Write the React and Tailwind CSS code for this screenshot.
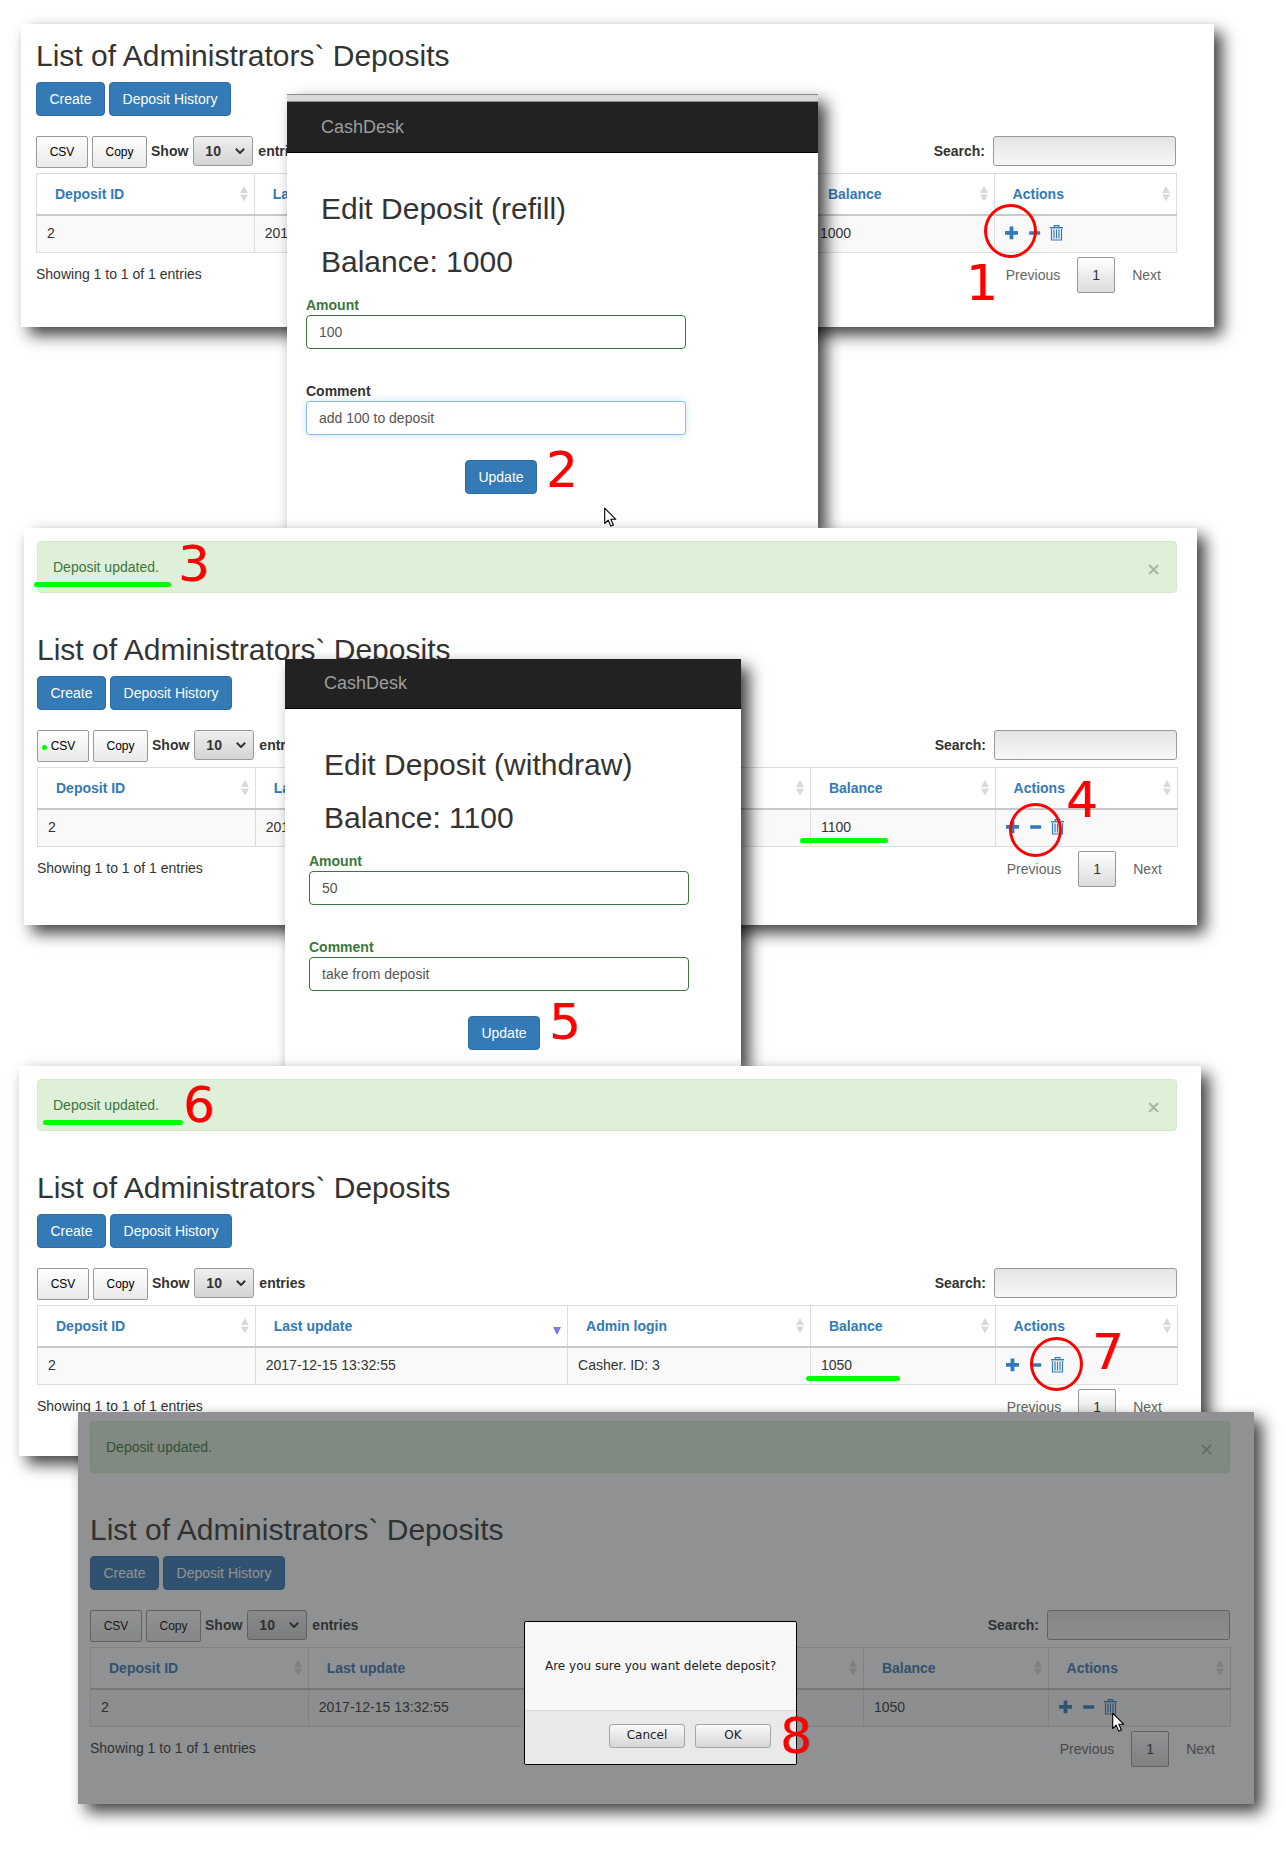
import { useId } from "react";

const blueButton =
  "h-[34px] rounded border border-[#2e6da4] bg-[#337ab7] text-sm leading-5 text-white";
const windowShadow = "shadow-[8px_8px_15px_rgba(0,0,0,0.75)]";

function Digit({ children, className }) {
  return (
    <span
      className={`pointer-events-none absolute font-['DejaVu_Sans',sans-serif] text-[50px] leading-none font-normal text-[#f00] [text-shadow:1px_0_0_rgba(60,0,0,0.35)] ${className}`}
    >
      {children}
    </span>
  );
}

function Ring({ className }) {
  return (
    <span
      className={`pointer-events-none absolute h-[54px] w-[53px] rounded-[50%] border-[3px] border-[#f00] ${className}`}
    />
  );
}

function Marker({ className }) {
  return <span className={`pointer-events-none absolute h-[5px] rounded-full bg-[#00ff00] ${className}`} />;
}

function Cursor({ className }) {
  return (
    <svg viewBox="0 0 13 20" className={`pointer-events-none absolute h-5 w-[13px] ${className}`} aria-hidden="true">
      <path
        d="M.7 1.2v15.3l3.5-3.3 2.6 5.9 2.6-1.2-2.6-5.6h5z"
        fill="#fff"
        stroke="#000"
        strokeWidth="1.1"
        strokeLinejoin="round"
      />
    </svg>
  );
}

function SortIcon({ sorted }) {
  return (
    <svg viewBox="0 0 8 16" className="h-4 w-2 shrink-0" aria-hidden="true">
      {sorted ? (
        <path d="M0 9h8l-3.4 7h-1.2z" fill="#7b7be0" />
      ) : (
        <path d="M4 0l4 7H0zM0 8.5h8l-4 7z" fill="#d9d9d9" />
      )}
    </svg>
  );
}

function PlusIcon() {
  return (
    <svg viewBox="0 0 14 16" className="h-4 w-3.5" fill="currentColor" aria-hidden="true">
      <path d="M5 1.5h3a.4.4 0 0 1 .4.4v4.2h4.2a.4.4 0 0 1 .4.4v2.8a.4.4 0 0 1-.4.4H8.4v4.2a.4.4 0 0 1-.4.4H5a.4.4 0 0 1-.4-.4V9.7H.4a.4.4 0 0 1-.4-.4V6.5a.4.4 0 0 1 .4-.4h4.2V1.9a.4.4 0 0 1 .4-.4z" />
    </svg>
  );
}

function MinusIcon() {
  return (
    <svg viewBox="0 0 14 16" className="h-4 w-3.5" fill="currentColor" aria-hidden="true">
      <rect x="2.2" y="6.2" width="11" height="3.6" rx=".5" />
    </svg>
  );
}

function TrashIcon() {
  return (
    <svg viewBox="0 0 14 16" className="h-4 w-3.5" fill="none" stroke="currentColor" aria-hidden="true">
      <path d="M5.2 2V.6h4.6V2" strokeWidth="1.1" />
      <path d="M1 2.7h13" strokeWidth="1.4" />
      <path d="M2.5 4v11h10V4" strokeWidth="1.2" />
      <path d="M5 4.5v9M7.5 4.5v9M10 4.5v9" strokeWidth="1.2" />
    </svg>
  );
}

const columns = ["Deposit ID", "Last update", "Admin login", "Balance", "Actions"];

function DepositTable({ balance }) {
  return (
    <table className="mt-[5px] w-full table-fixed border-collapse border border-[#ddd] text-sm leading-5">
      <colgroup>
        <col className="w-[19.1%]" />
        <col className="w-[27.4%]" />
        <col className="w-[21.3%]" />
        <col className="w-[16.2%]" />
        <col className="w-[16%]" />
      </colgroup>
      <thead>
        <tr>
          {columns.map((c, i) => (
            <th key={c} className="h-[41px] border border-b-2 border-[#ddd] border-b-[#c8c8c8] p-0 text-left font-bold">
              <div className="flex items-center justify-between pr-1.5 pl-[18px]">
                <a href="#sort" className="text-[#337ab7]">
                  {c}
                </a>
                <SortIcon sorted={i === 1} />
              </div>
            </th>
          ))}
        </tr>
      </thead>
      <tbody>
        <tr className="bg-[#f9f9f9]">
          {["2", "2017-12-15 13:32:55", "Casher. ID: 3", balance].map((v) => (
            <td key={v} className="h-[38px] border border-[#ddd] px-2.5 pt-0 pb-px">
              {v}
            </td>
          ))}
          <td className="border border-[#ddd] px-2.5 pt-0 pb-px">
            <div className="flex items-center gap-2 text-[#337ab7]">
              <a href="#refill" aria-label="Refill deposit">
                <PlusIcon />
              </a>
              <a href="#withdraw" aria-label="Withdraw from deposit">
                <MinusIcon />
              </a>
              <a href="#delete" aria-label="Delete deposit">
                <TrashIcon />
              </a>
            </div>
          </td>
        </tr>
      </tbody>
    </table>
  );
}

function DepositList({ balance, alert }) {
  const grayButton =
    "h-8 rounded-xs border border-[#999] bg-linear-to-b from-white to-[#e9e9e9] text-xs font-normal text-black";
  const pageLink = "h-9 px-[15px] text-[#666]";
  return (
    <>
      {alert && (
        <div
          role="status"
          className="mr-px mb-10 flex items-center justify-between rounded border border-[#d6e9c6] bg-[#dff0d8] p-[15px] text-sm leading-5 text-[#3c763d]"
        >
          Deposit updated.
          <button
            type="button"
            aria-label="Close"
            className="h-5 pt-1 font-['DejaVu_Sans',sans-serif] text-lg leading-4 font-bold text-black/25"
          >
            ×
          </button>
        </div>
      )}
      <h1 className="mb-2.5 text-[30px] leading-[33px]">List of Administrators` Deposits</h1>
      <div className="mb-5 flex gap-1">
        <button type="button" className={`w-[69px] ${blueButton}`}>
          Create
        </button>
        <button type="button" className={`w-[122px] ${blueButton}`}>
          Deposit History
        </button>
      </div>
      <div className="flex items-start gap-1 text-sm font-bold">
        <button type="button" className={`w-[52px] ${grayButton}`}>
          CSV
        </button>
        <button type="button" className={`w-[55px] ${grayButton}`}>
          Copy
        </button>
        <label className="flex items-center gap-[5px]">
          Show
          <span className="relative">
            <select className="block h-[30px] w-[60px] appearance-none rounded-[3px] border border-[#999] bg-linear-to-b from-[#efefef] to-[#d4d4d4] pl-[11px] font-bold">
              <option>10</option>
            </select>
            <svg viewBox="0 0 10 6" className="pointer-events-none absolute top-3 right-2 h-1.5 w-2.5" aria-hidden="true">
              <path d="M.8.8L5 5 9.2.8" fill="none" stroke="#333" strokeWidth="2" />
            </svg>
          </span>
          entries
        </label>
        <label className="mr-px ml-auto flex items-center gap-2">
          Search:
          <input
            type="search"
            className="h-[30px] w-[183px] rounded-[3px] border border-[#999] bg-linear-to-b from-[#e4e4e4] to-[#f7f7f7] px-2 font-normal"
          />
        </label>
      </div>
      <DepositTable balance={balance} />
      <div className="mt-1 flex items-center justify-between text-sm leading-5">
        <p className="pb-0.5">Showing 1 to 1 of 1 entries</p>
        <nav aria-label="Pagination" className="mr-px flex gap-0.5">
          <button type="button" className={pageLink}>
            Previous
          </button>
          <button
            type="button"
            className="h-9 w-[38px] rounded-xs border border-[#979797] bg-linear-to-b from-white to-[#dcdcdc]"
          >
            1
          </button>
          <button type="button" className={pageLink}>
            Next
          </button>
        </nav>
      </div>
    </>
  );
}

function Field({ label, value, focused, className }) {
  const id = useId();
  return (
    <div className={className}>
      <label htmlFor={id} className={`block text-sm leading-5 font-bold ${focused ? "text-[#333]" : "text-[#3c763d]"}`}>
        {label}
      </label>
      <input
        id={id}
        type="text"
        defaultValue={value}
        className={`block h-[34px] w-full rounded border bg-white px-3 text-sm text-[#555] ${
          focused ? "border-[#8bbbe4] shadow-[0_0_8px_rgba(102,175,233,0.35)]" : "border-[#3c763d]"
        }`}
      />
    </div>
  );
}

function EditDeposit({ action, balance, amount, comment, commentFocused, bodyClass, headerClass }) {
  return (
    <>
      <header className={`border-b border-black bg-[#222] pb-[15px] text-lg leading-5 text-[#9d9d9d] ${headerClass}`}>
        CashDesk
      </header>
      <form className={`pt-[39px] ${bodyClass}`} onSubmit={(e) => e.preventDefault()}>
        <div className="flex flex-col gap-5 pl-[15px] text-[30px] leading-[33px]">
          <h2>Edit Deposit ({action})</h2>
          <p>Balance: {balance}</p>
        </div>
        <Field label="Amount" value={amount} className="mt-[17px]" />
        <Field label="Comment" value={comment} focused={commentFocused} className="mt-8" />
        <button type="submit" className={`mt-[25px] ml-[159px] block w-[72px] ${blueButton}`}>
          Update
        </button>
      </form>
    </>
  );
}

function ConfirmDialog() {
  const button =
    "h-6 w-[76px] rounded-[3px] border border-[#a6a6a6] bg-linear-to-b from-[#fafafa] to-[#d6d6d6] pb-0.5 text-[#222]";
  return (
    <div
      role="dialog"
      aria-label="Confirm deletion"
      className="absolute top-[209px] left-[446px] w-[273px] overflow-hidden rounded-xs border border-black bg-[#f7f7f7] font-['DejaVu_Sans',sans-serif] text-xs leading-4 text-[#222]"
    >
      <p className="py-9 text-center">Are you sure you want delete deposit?</p>
      <div className="flex justify-end gap-2.5 border-t border-[#d9d9d9] bg-[#e9e9e9] pt-[13px] pr-[25px] pb-4">
        <button type="button" className={button}>
          Cancel
        </button>
        <button type="button" className={button}>
          OK
        </button>
      </div>
    </div>
  );
}

export default function App() {
  return (
    <main className="flex flex-col bg-white pt-6 pb-12 font-['Liberation_Sans',Arial,sans-serif] text-[#333]">
      <section className={`relative mr-[72px] ml-[21px] bg-white pt-[15px] pr-[37px] pb-[34px] pl-[15px] ${windowShadow}`}>
        <DepositList balance="1000" />
        <div
          className={`absolute top-[70px] left-[266px] w-[531px] bg-white pb-[34px] ${windowShadow}`}
        >
          <div className="h-2 border-y border-[#8c8c8c] bg-[#d8d8d8]" />
          <EditDeposit
            action="refill"
            balance="1000"
            amount="100"
            comment="add 100 to deposit"
            commentFocused
            headerClass="pt-[15px] pl-[34px]"
            bodyClass="pl-[19px] pr-[132px]"
          />
          <Digit className="top-[351px] left-[259px]">2</Digit>
          <Cursor className="top-[413px] left-[317px]" />
        </div>
        <Ring className="top-[180px] left-[963px]" />
        <Digit className="top-[234px] left-[945px]">1</Digit>
      </section>

      <section className={`relative mt-[201px] mr-[89px] ml-6 bg-white pt-[13px] pr-[19px] pb-[38px] pl-[13px] ${windowShadow}`}>
        <DepositList balance="1100" alert />
        <div className={`absolute top-[131px] left-[261px] w-[456px] bg-white pb-4 ${windowShadow}`}>
          <EditDeposit
            action="withdraw"
            balance="1100"
            amount="50"
            comment="take from deposit"
            headerClass="pt-[14px] pl-[39px]"
            bodyClass="pl-6 pr-[52px]"
          />
          <Digit className="top-[338px] left-[264px]">5</Digit>
        </div>
        <Marker className="top-[54px] left-2.5 w-[137px]" />
        <Marker className="top-[217px] left-[18px] w-[5px]" />
        <Marker className="top-[310px] left-[776px] w-[88px]" />
        <Ring className="top-[275px] left-[985px]" />
        <Digit className="top-[11px] left-[154px]">3</Digit>
        <Digit className="top-[247px] left-[1042px]">4</Digit>
      </section>

      <section className={`relative mt-[141px] mr-[85px] ml-[19px] bg-white pt-[13px] pr-[23px] pb-[31px] pl-[18px] ${windowShadow}`}>
        <DepositList balance="1050" alert />
        <Marker className="top-[54px] left-6 w-[140px]" />
        <Marker className="top-[310px] left-[787px] w-[94px]" />
        <Ring className="top-[271px] left-[1011px]" />
        <Digit className="top-[14px] left-[164px]">6</Digit>
        <Digit className="top-[261px] left-[1073px]">7</Digit>
      </section>

      <section className={`relative -mt-11 mr-8 ml-[78px] bg-white pt-[9px] pr-[23px] pb-[37px] pl-3 ${windowShadow}`}>
        <DepositList balance="1050" alert />
        <div className="absolute inset-0 bg-[rgba(45,47,50,0.53)]" />
        <Cursor className="top-[300px] left-[1034px]" />
        <ConfirmDialog />
        <Digit className="top-[299px] left-[702px]">8</Digit>
      </section>
    </main>
  );
}
